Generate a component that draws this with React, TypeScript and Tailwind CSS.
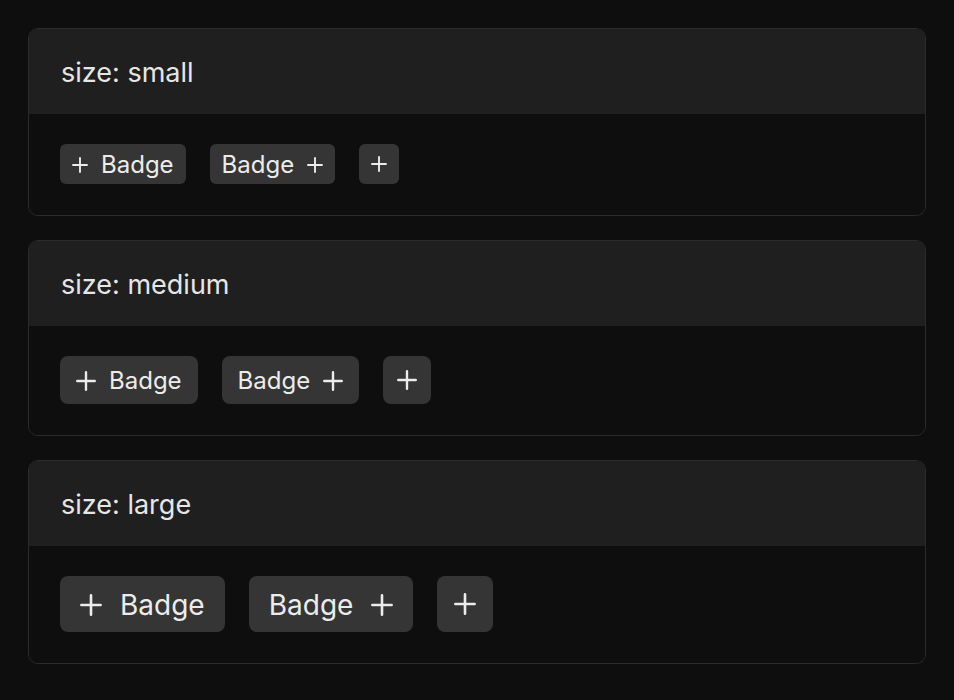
import React from 'react';

type Size = 'small' | 'medium' | 'large';

const sizes: Record<Size, { box: string; text: string; icon: number; only: string }> = {
  small: { box: 'h-10 px-3 gap-[13px] rounded-md', text: 'text-[24px]', icon: 16, only: 'w-10 h-10 rounded-md' },
  medium: { box: 'h-12 px-4 gap-[13px] rounded-lg', text: 'text-[24px]', icon: 20, only: 'w-12 h-12 rounded-lg' },
  large: { box: 'h-14 px-5 gap-[18px] rounded-lg', text: 'text-[28px]', icon: 22, only: 'w-14 h-14 rounded-lg' },
};

function Plus({ size }: { size: number }) {
  return (
    <svg width={size} height={size} viewBox="0 0 16 16" fill="none" stroke="currentColor" strokeWidth={1.9} strokeLinecap="round" className="shrink-0">
      <path d="M8 1v14M1 8h14" />
    </svg>
  );
}

function Badge({ size, icon }: { size: Size; icon: 'left' | 'right' | 'only' }) {
  const s = sizes[size];
  if (icon === 'only') {
    return (
      <span className={`flex items-center justify-center bg-[#353535] text-[#ececec] ${s.only}`}>
        <Plus size={s.icon} />
      </span>
    );
  }
  return (
    <span className={`flex items-center bg-[#353535] text-[#ececec] leading-none pt-px ${s.box} ${s.text}`}>
      {icon === 'left' && <Plus size={s.icon} />}
      <span>Badge</span>
      {icon === 'right' && <Plus size={s.icon} />}
    </span>
  );
}

function Section({ size }: { size: Size }) {
  return (
    <div className="rounded-[10px] border border-[#2b2b2b] overflow-hidden">
      <div className="h-[85px] flex items-center px-8 pt-[3px] bg-[#1f1f1f] text-[27px] text-[#e6e6e6]">size: {size}</div>
      <div className="flex items-center gap-6 pl-[31px] pt-[30px] pb-[31px] bg-[#0e0e0e]">
        <Badge size={size} icon="left" />
        <Badge size={size} icon="right" />
        <Badge size={size} icon="only" />
      </div>
    </div>
  );
}

export default function App() {
  return (
    <div className="min-h-[700px] bg-[#0e0e0e] px-[28px] pt-[28px] flex flex-col gap-6" style={{ fontFamily: 'Inter, "Noto Sans", sans-serif' }}>
      <Section size="small" />
      <Section size="medium" />
      <Section size="large" />
    </div>
  );
}
